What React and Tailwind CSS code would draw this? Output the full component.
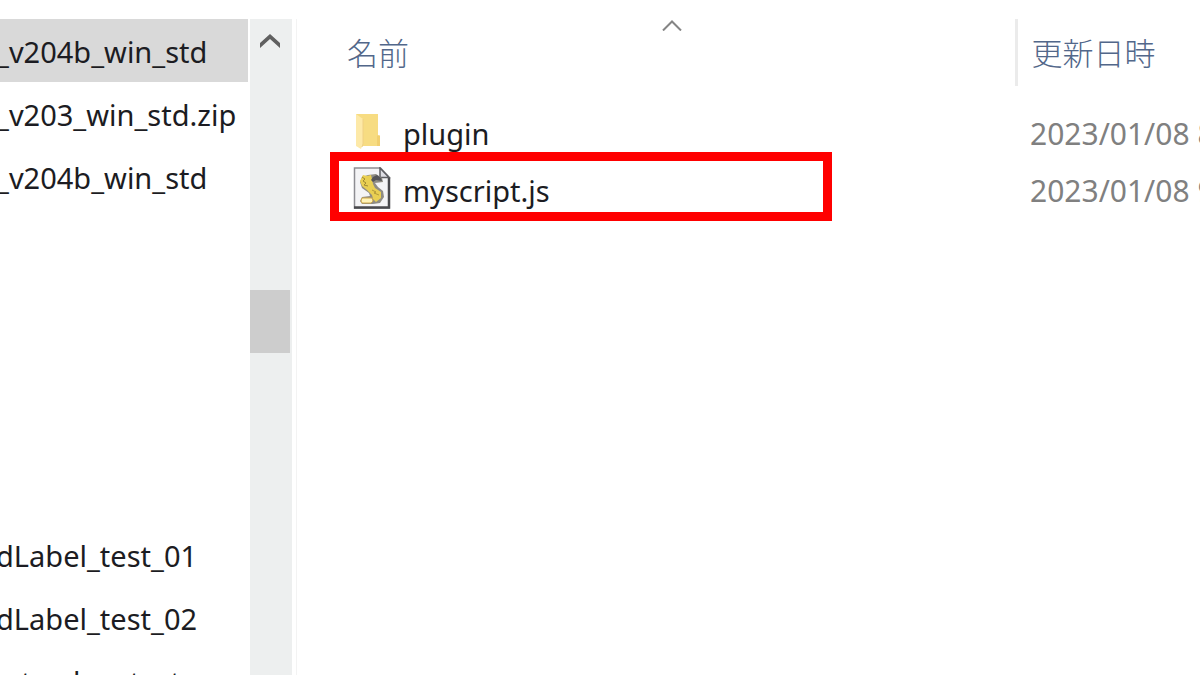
const tree = [
  { label: "_v204b_win_std", shift: "-ml-1", selected: true },
  { label: "_v203_win_std.zip", shift: "-ml-1" },
  { label: "_v204b_win_std", shift: "-ml-1" },
  null,
  null,
  null,
  null,
  null,
  { label: "dLabel_test_01", shift: "-ml-1" },
  { label: "dLabel_test_02", shift: "-ml-1" },
  { label: "_tracker_test", shift: "ml-2" },
];

const files = [
  { name: "plugin", date: "2023/01/08 8:30", Icon: FolderIcon },
  { name: "myscript.js", date: "2023/01/08 9:12", Icon: ScriptIcon, marked: true },
];

function FolderIcon() {
  return (
    <svg viewBox="0 0 38 42" className="mb-[6px] h-[42px] w-[38px] shrink-0" aria-hidden="true">
      <path d="M3 4h22v21l2 1v10H9z" fill="#f7dc82" />
      <path d="M24 25.500h3V36h-3z" fill="#f1cf70" />
      <path d="M3 4l7 5v25l-2 5-5-3z" fill="#fde9a8" />
      <path d="M10 9v25l-1 3" fill="none" stroke="#f0d084" strokeWidth="1" />
    </svg>
  );
}

function ScriptIcon() {
  return (
    <svg viewBox="0 0 38 42" className="mb-[6px] h-[42px] w-[38px] shrink-0" aria-hidden="true">
      <path d="M1.500 1h26l8.500 9v31H1.500z" fill="#f4f4f6" stroke="#8d8d92" strokeWidth="1.500" />
      <path d="M1 40.500h35V10" fill="none" stroke="#4a4a4e" strokeWidth="2.500" />
      <path d="M27 1v9.500h9z" fill="#dedee4" stroke="#5d5d62" strokeWidth="1.500" />
      <path d="M15 8l8-1 6 4 1 4-8 1 3 4 5 4 1 6-4 6-7 1H9l-2-3 2-4 8-1-1-3-7-5-2-6 2-5z" fill="#8f8c84" />
      <path d="M10 8l4 1 4-1 1 4 1 5 2 4 6 4v6l-5 4-3-3-1-4-5-5-5-4-2-5z" fill="#e9cf52" />
      <path d="M9 10l3 2-2 2 3 2-2 2 4 1" fill="none" stroke="#a08a34" strokeWidth="1" />
      <path d="M18 13l2-3 4-2 4 3 1 3-6-1-3 2z" fill="#55555a" />
      <path d="M19 23l4 2-2 1 5 2" fill="none" stroke="#b39a3a" strokeWidth="1" />
      <path d="M9 31h10l1 3-2 2H9l-1-2z" fill="#fff3b8" stroke="#d0a94a" />
    </svg>
  );
}

function SortArrow() {
  return (
    <svg viewBox="0 0 20 12" className="absolute left-[332px] top-0 h-3 w-5 text-[#858585]" fill="none" stroke="currentColor" strokeWidth="2" aria-hidden="true">
      <path d="M1 11.500l9-9 9 9" />
    </svg>
  );
}

export default function App() {
  return (
    <div className="flex h-screen overflow-hidden bg-white pt-[19px] font-['Noto_Sans','Noto_Sans_CJK_JP',sans-serif] text-[29px] leading-[40px] text-[#1c1c22]">
      <nav aria-label="Folders" className="w-[248px] shrink-0 overflow-hidden">
        <ul>
          {tree.map((item, i) => (
            <li key={i} className="h-[63px]">
              {item && (
                <a
                  href="#"
                  className={
                    item.selected
                      ? "flex h-full items-center whitespace-nowrap bg-[#d9d9d9] pt-[2px]"
                      : "flex h-full items-center whitespace-nowrap pt-[2px]"
                  }
                >
                  <span className={item.shift}>{item.label}</span>
                </a>
              )}
            </li>
          ))}
        </ul>
      </nav>
      <div className="ml-[2px] flex w-[42px] shrink-0 flex-col bg-[#edefef]">
        <button type="button" aria-label="Scroll up" className="flex h-[44px] w-10 items-center justify-center text-[#606060]">
          <svg viewBox="0 0 20 14" className="h-[14px] w-5" fill="currentColor" aria-hidden="true">
            <path d="M10 0l10 9v5L10 5 0 14V9z" />
          </svg>
        </button>
        <div className="mt-[227px] h-[63px] w-10 bg-[#cdcdcd]" />
      </div>
      <main className="ml-1 min-w-0 flex-1 overflow-hidden border-l border-[#f3f3f3] pl-[33px]">
        <table className="w-full min-w-[870px] table-fixed text-left">
          <colgroup>
            <col className="w-[686px]" />
            <col />
          </colgroup>
          <thead className="text-[31px] text-[#52678a]">
            <tr className="h-[67px]">
              <th scope="col" className="relative border-r-[3px] border-[#ebebeb] p-0 pl-[17px] font-light">
                名前
                <SortArrow />
              </th>
              <th scope="col" className="p-0 pl-[14px] font-light">更新日時</th>
            </tr>
          </thead>
          <tbody>
            <tr className="h-[19px]" aria-hidden="true" />
            {files.map(({ name, date, Icon, marked }) => (
              <tr key={name} className="h-[57px]">
                <td className="relative p-0">
                  <div className="flex items-center gap-3 pl-[23px]">
                    <Icon />
                    <span>{name}</span>
                  </div>
                  {marked && (
                    <div className="absolute -top-[10px] left-0 h-[69px] w-[502px] border-[9px] border-[#ff0000]" />
                  )}
                </td>
                <td className="overflow-hidden whitespace-nowrap p-0 pl-[14px] text-[30px] text-[#808080]">{date}</td>
              </tr>
            ))}
          </tbody>
        </table>
      </main>
    </div>
  );
}
